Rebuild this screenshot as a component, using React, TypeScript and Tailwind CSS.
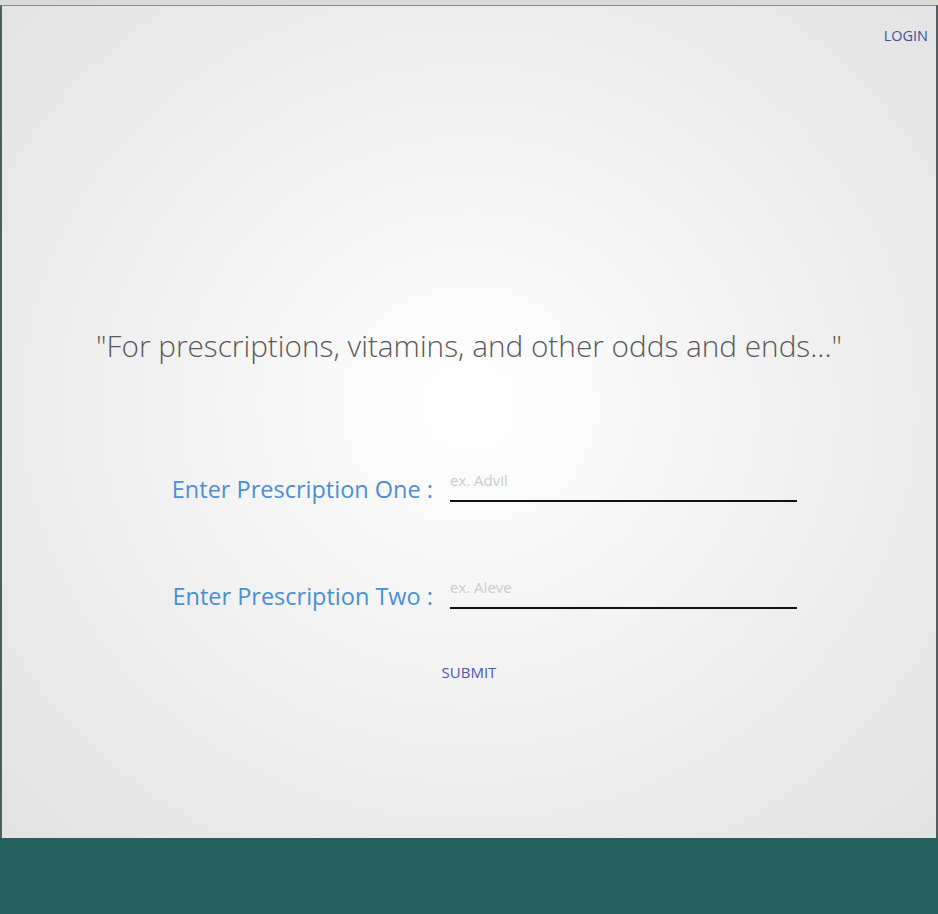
import React from 'react';

const font = { fontFamily: '"Open Sans", "Noto Sans", sans-serif' };

const Field = ({ label, placeholder }: { label: string; placeholder: string }) => (
  <div className="flex items-end">
    <label className="w-[448px] shrink-0 text-right pr-[17px] text-[23.5px] leading-[30px] -mb-[2px] text-[#4a8fd6]">{label}</label>
    <div className="w-[347px] border-b-2 border-[#111] pb-[8px]">
      <input
        className="w-full bg-transparent outline-none text-[15px] leading-[18px] text-[#555] placeholder:text-[#cccccc]"
        style={font}
        placeholder={placeholder}
      />
    </div>
  </div>
);

const App = () => {
  return (
    <div className="w-[938px] h-[914px] flex flex-col bg-[#dcdcdc]" style={font}>
      <div className="h-[5px] bg-[#dadada]" />
      <main className="flex-1 flex flex-col border-t border-[#8a8a8a] border-x-2 border-x-[#4d5d62] bg-[radial-gradient(ellipse_at_50%_48%,#ffffff_0%,#f5f5f5_35%,#e2e2e2_100%)]">
        <div className="flex justify-end pr-[8px] pt-[20px]">
          <button className="text-[14.5px] leading-[20px] text-[#3d4f9c]">LOGIN</button>
        </div>
        <p className="mt-[280px] text-center text-[29.75px] leading-[40px] font-light text-[#595959]">
          "For prescriptions, vitamins, and other odds and ends..."
        </p>
        <div className="mt-[102px] flex flex-col gap-[73px]">
          <Field label="Enter Prescription One :" placeholder="ex. Advil" />
          <Field label="Enter Prescription Two :" placeholder="ex. Aleve" />
        </div>
        <div className="mt-[53px] flex justify-center">
          <button className="text-[15px] leading-[20px] text-[#4a56b8]">SUBMIT</button>
        </div>
      </main>
      <footer className="h-[76px] bg-[#225f5e]" />
    </div>
  );
};

export default App;
